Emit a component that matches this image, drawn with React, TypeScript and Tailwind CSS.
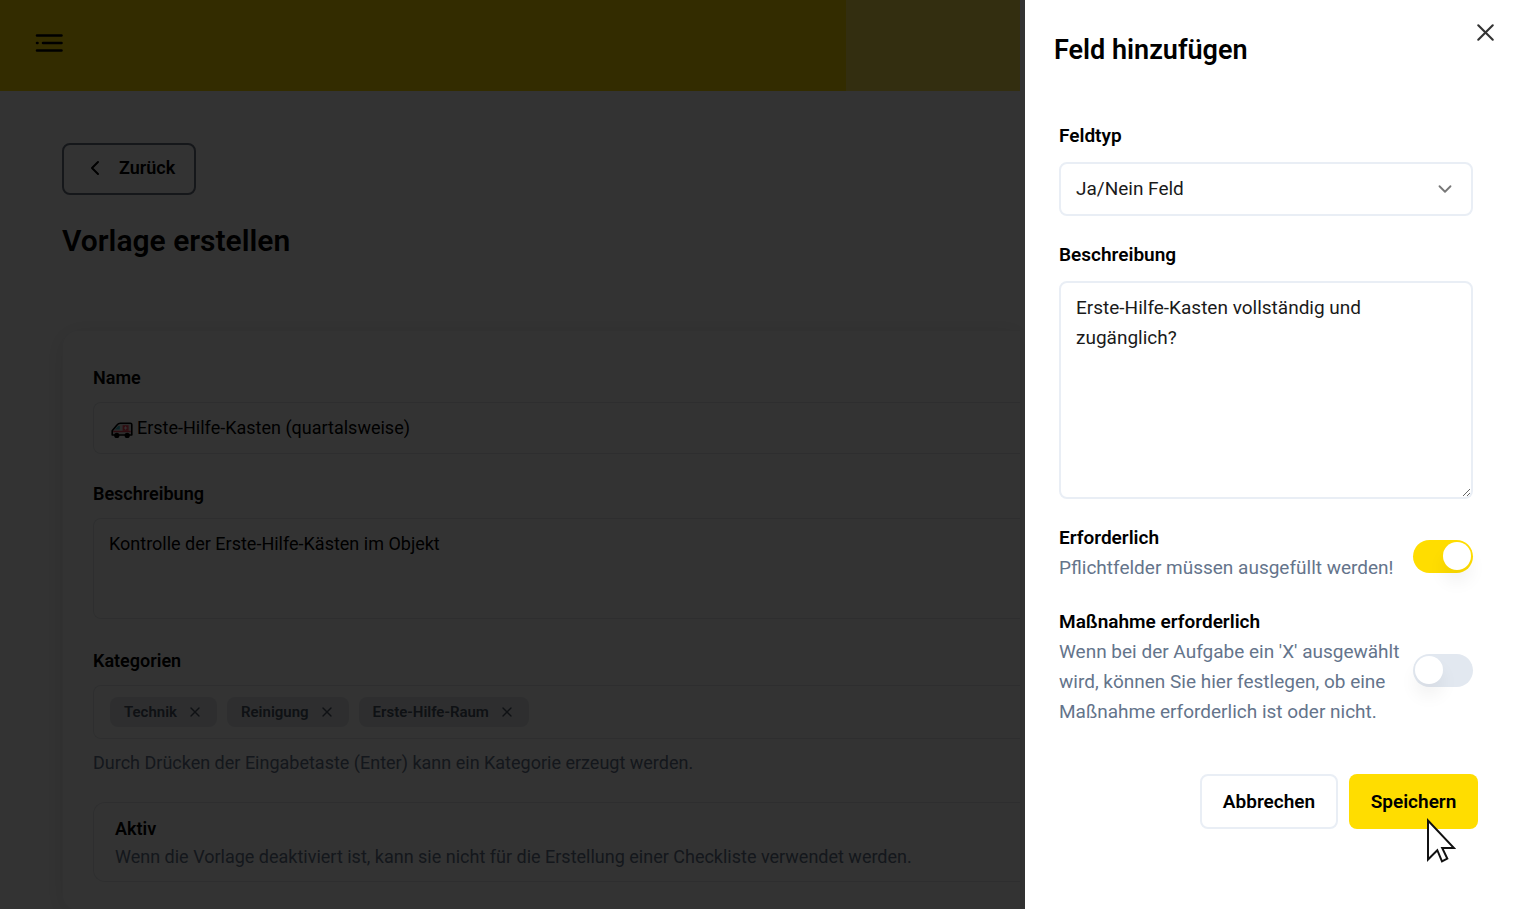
import { useState } from 'react';
import type { ReactNode } from 'react';
import { ChevronDown, ChevronLeft, X } from 'lucide-react';

const categories = ['Technik', 'Reinigung', 'Erste-Hilfe-Raum'];

function MenuIcon() {
  return (
    <svg viewBox="0 0 28 20" className="h-5 w-7" fill="none" stroke="currentColor" strokeWidth="2.6" strokeLinecap="round">
      <path d="M2 2.5h24.5M8 10h18.5M2 10h0.5M2 17.5h24.5" />
    </svg>
  );
}

function AmbulanceIcon() {
  return (
    <svg viewBox="0 0 22 18" className="mt-1 h-[18px] w-[22px] shrink-0" aria-hidden="true">
      <path
        d="M1.2 14V9.8L6 4Q7.4 2.2 9.4 2.2H19.4Q20.8 2.2 20.8 3.6V14Z"
        fill="#ddd"
        stroke="#000"
        strokeWidth="1.6"
        strokeLinejoin="round"
      />
      <path d="M4 8.6L7.2 5H8.8V8.6Z" fill="#38b6c8" />
      <path d="M2.2 9.8H19.8V11.2H2.2Z" fill="#e94458" />
      <rect x="11.6" y="4.2" width="6" height="5.6" fill="#f04458" />
      <path d="M14.6 5.4v3.2M13 7h3.2" stroke="#fff" strokeWidth="1" />
      <circle cx="5.8" cy="14.4" r="2.6" fill="#000" />
      <circle cx="16.2" cy="14.4" r="2.6" fill="#000" />
    </svg>
  );
}

function CursorIcon() {
  return (
    <svg
      viewBox="0 0 30 46"
      className="pointer-events-none absolute left-[77px] top-11 h-[46px] w-[30px]"
      aria-hidden="true"
    >
      <path
        d="M2 2.5V41.5L11.3 32.2L16 43.3L21.3 40.6L16.2 30H28Z"
        fill="#fff"
        stroke="#111"
        strokeWidth="2"
        strokeLinejoin="miter"
      />
    </svg>
  );
}

type ToggleRowProps = {
  id: string;
  title: string;
  checked: boolean;
  onChange: (value: boolean) => void;
  children: ReactNode;
};

function ToggleRow({ id, title, checked, onChange, children }: ToggleRowProps) {
  return (
    <div className="flex items-center justify-between gap-3">
      <div className="flex-1 leading-[30px]">
        <label htmlFor={id} className="block font-semibold">
          {title}
        </label>
        <p className="text-[#64748b]">{children}</p>
      </div>
      <input
        id={id}
        type="checkbox"
        role="switch"
        checked={checked}
        onChange={(e) => onChange(e.target.checked)}
        className="mt-[6px] flex h-[33px] w-[60px] shrink-0 cursor-pointer appearance-none items-center rounded-full bg-[#e2e8f0] px-[2px] before:size-7 before:rounded-full before:bg-white before:shadow-[0_12px_18px_rgba(0,0,0,0.06)] checked:bg-[#ffdd00] checked:before:translate-x-7"
      />
    </div>
  );
}

function TemplatePage() {
  return (
    <main className="relative min-w-0 flex-1 overflow-hidden bg-white pr-[5px] text-lg leading-7">
      <header className="flex h-[91px] bg-[#ffdd00]">
        <div className="flex flex-1 items-center pb-[5px] pl-[35px]">
          <button type="button" aria-label="Menü">
            <MenuIcon />
          </button>
        </div>
        <div className="w-[174px] bg-[#ffe650]" />
      </header>

      <div className="pl-[62px] pt-[52px]">
        <button
          type="button"
          className="flex h-[52px] w-[134px] items-center gap-3 rounded-lg border-2 border-[#6b7280] pb-[2px] pl-[19px] font-semibold"
        >
          <ChevronLeft className="size-6" />
          Zurück
        </button>
        <h1 className="mt-[26px] text-[30px] font-semibold leading-10">Vorlage erstellen</h1>

        <form className="mt-[69px] rounded-l-2xl border border-r-0 border-gray-100 pb-7 pl-[30px] pt-[33px] shadow-[0_4px_24px_rgba(0,0,0,0.12)]">
          <label htmlFor="name" className="block font-semibold">
            Name
          </label>
          <div className="mt-[10px] flex h-[52px] items-center gap-1 rounded-l-lg border border-r-0 border-gray-200 pl-[17px]">
            <AmbulanceIcon />
            <input id="name" defaultValue="Erste-Hilfe-Kasten (quartalsweise)" className="flex-1 outline-none" />
          </div>

          <label htmlFor="template-description" className="mt-[26px] block font-semibold">
            Beschreibung
          </label>
          <textarea
            id="template-description"
            defaultValue="Kontrolle der Erste-Hilfe-Kästen im Objekt"
            className="mt-[10px] block h-[101px] w-full resize-none rounded-l-lg border border-r-0 border-gray-200 px-[15px] py-[11px] outline-none"
          />

          <label htmlFor="categories" className="mt-7 block font-semibold">
            Kategorien
          </label>
          <div className="mt-[10px] flex h-[54px] items-center gap-[10px] rounded-l-lg border border-r-0 border-gray-200 pl-4">
            {categories.map((category) => (
              <span
                key={category}
                className="flex h-[30px] items-center gap-[10px] rounded-lg bg-gray-200 px-[14px] text-[15px] font-semibold text-gray-600"
              >
                {category}
                <button type="button" aria-label={`${category} entfernen`}>
                  <X className="size-4" />
                </button>
              </span>
            ))}
            <input id="categories" className="min-w-0 flex-1 outline-none" />
          </div>
          <p className="mt-[10px] text-[#64748b]">
            Durch Drücken der Eingabetaste (Enter) kann ein Kategorie erzeugt werden.
          </p>

          <div className="mt-[25px] rounded-l-xl border border-r-0 border-gray-200 pb-[10px] pl-[21px] pt-3">
            <h2 className="font-semibold">Aktiv</h2>
            <p className="text-[#64748b]">
              Wenn die Vorlage deaktiviert ist, kann sie nicht für die Erstellung einer Checkliste verwendet werden.
            </p>
          </div>
        </form>
      </div>

      <div className="absolute inset-0 bg-black/80" />
    </main>
  );
}

function FieldDrawer() {
  const [required, setRequired] = useState(true);
  const [actionRequired, setActionRequired] = useState(false);

  return (
    <aside role="dialog" aria-labelledby="drawer-title" className="w-[490px] shrink-0 bg-white text-[19px] leading-[30px]">
      <div className="flex items-start justify-between pl-[29px] pr-[15px] pt-[18px]">
        <h2 id="drawer-title" className="mt-3 text-[27px] font-semibold leading-10">
          Feld hinzufügen
        </h2>
        <button type="button" aria-label="Schließen" className="text-[#333]">
          <X className="size-[29px]" strokeWidth={1.75} />
        </button>
      </div>

      <form className="pt-[51px]" onSubmit={(e) => e.preventDefault()}>
        <div className="flex flex-col gap-6 pl-[34px] pr-[42px]">
          <div>
            <label htmlFor="field-type" className="block font-semibold">
              Feldtyp
            </label>
            <div className="relative mt-[11px]">
              <select
                id="field-type"
                className="h-[54px] w-full appearance-none rounded-lg border-2 border-[#e9eef5] bg-white px-[15px] text-[#1a1a1a] outline-none"
              >
                <option>Ja/Nein Feld</option>
              </select>
              <ChevronDown className="pointer-events-none absolute right-[17px] top-4 size-[22px] text-[#777]" />
            </div>
          </div>

          <div>
            <label htmlFor="field-description" className="block font-semibold">
              Beschreibung
            </label>
            <textarea
              id="field-description"
              defaultValue="Erste-Hilfe-Kasten vollständig und zugänglich?"
              className="mt-[11px] block h-[218px] w-full resize-y rounded-lg border-2 border-[#e9eef5] px-[15px] py-[10px] text-[#1a1a1a] outline-none"
            />
          </div>

          <ToggleRow id="required" title="Erforderlich" checked={required} onChange={setRequired}>
            Pflichtfelder müssen ausgefüllt werden!
          </ToggleRow>
          <ToggleRow
            id="action-required"
            title="Maßnahme erforderlich"
            checked={actionRequired}
            onChange={setActionRequired}
          >
            Wenn bei der Aufgabe ein 'X' ausgewählt wird, können Sie hier festlegen, ob eine Maßnahme erforderlich ist
            oder nicht.
          </ToggleRow>
        </div>

        <div className="mt-[47px] flex justify-end gap-[11px] pr-[37px] font-semibold">
          <button type="button" className="h-[55px] w-[138px] rounded-lg border-2 border-[#e9eef5] bg-white">
            Abbrechen
          </button>
          <button type="submit" className="relative h-[55px] w-[129px] rounded-lg bg-[#ffdd00]">
            Speichern
            <CursorIcon />
          </button>
        </div>
      </form>
    </aside>
  );
}

export default function App() {
  return (
    <div className="flex min-h-screen overflow-hidden bg-white font-[Roboto,sans-serif] text-black">
      <TemplatePage />
      <FieldDrawer />
    </div>
  );
}
